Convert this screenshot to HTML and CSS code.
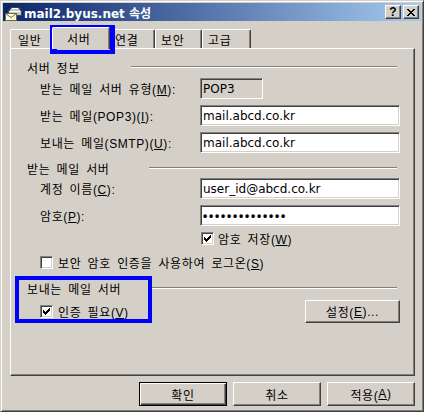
FILE: index.html
```html
<!DOCTYPE html>
<html lang="ko">
<head>
<meta charset="utf-8">
<title>mail2.byus.net 속성</title>
<link rel="stylesheet" href="styles.css">
</head>
<body>
<div class="window">
  <div class="titlebar">
    <svg class="ticon" width="17" height="16" viewBox="0 0 17 16">
      <path d="M3.5 6.5 L6.5 2.5 H13.5 L16.5 6.5 V10.5 H3.5 Z" fill="#c8c8c8" stroke="#404040"/>
      <path d="M4.5 6.5 H15.5" stroke="#ffffff"/>
      <path d="M7 3.5 H13" stroke="#ffffff"/>
      <rect x="0.5" y="8.5" width="11" height="7" fill="#ffffd8" stroke="#6a6a50"/>
      <path d="M0.5 8.5 L6 12.5 L11.5 8.5" fill="none" stroke="#6a6a50"/>
    </svg>
    <span class="title">mail2.byus.net 속성</span>
    <div class="tbtns">
      <span class="tbtn help">?</span>
      <span class="tbtn">
        <svg width="8" height="7" viewBox="0 0 8 7"><path d="M0 0h2v1H0zM6 0h2v1H6zM1 1h2v1H1zM5 1h2v1H5zM2 2h4v1H2zM3 3h2v1H3zM2 4h4v1H2zM1 5h2v1H1zM5 5h2v1H5zM0 6h2v1H0zM6 6h2v1H6z" fill="#000"/></svg>
      </span>
    </div>
  </div>

  <div class="content">
    <div class="tabs">
      <div class="tab t1">일반</div>
      <div class="tab t2 sel">서버</div>
      <div class="tab t3">연결</div>
      <div class="tab t4">보안</div>
      <div class="tab t5">고급</div>
    </div>

    <div class="panel">
      <div class="ghead g1"><span>서버 정보</span><span class="gline wide"></span></div>
      <div class="frow r-first"><span class="flabel">받는 메일 서버 유형(<u>M</u>):</span><span class="field ro">POP3</span></div>
      <div class="frow"><span class="flabel">받는 메일(POP3)(<u>I</u>):</span><span class="field">mail.abcd.co.kr</span></div>
      <div class="frow"><span class="flabel">보내는 메일(SMTP)(<u>U</u>):</span><span class="field">mail.abcd.co.kr</span></div>

      <div class="ghead g2"><span>받는 메일 서버</span><span class="gline"></span></div>
      <div class="frow r-first2"><span class="flabel">계정 이름(<u>C</u>):</span><span class="field">user_id@abcd.co.kr</span></div>
      <div class="frow"><span class="flabel">암호(<u>P</u>):</span><span class="field pw">••••••••••••••</span></div>
      <div class="chk c-save">
        <span class="box"><svg width="11" height="11" viewBox="0 0 11 11"><path transform="translate(1 1)" d="M1 3V6H2V7H3V8H4V7H5V6H6V5H7V4H8V1H7V2H6V3H5V4H4V5H3V4H2V3Z" fill="#000"/></svg></span>
        <span>암호 저장(<u>W</u>)</span>
      </div>
      <div class="chk c-spa">
        <span class="box"></span>
        <span>보안 암호 인증을 사용하여 로그온(<u>S</u>)</span>
      </div>

      <div class="ghead g3"><span>보내는 메일 서버</span><span class="gline"></span></div>
      <div class="lastrow">
        <div class="chk">
          <span class="box"><svg width="11" height="11" viewBox="0 0 11 11"><path transform="translate(1 1)" d="M1 3V6H2V7H3V8H4V7H5V6H6V5H7V4H8V1H7V2H6V3H5V4H4V5H3V4H2V3Z" fill="#000"/></svg></span>
          <span>인증 필요(<u>V</u>)</span>
        </div>
        <span class="btn settings">설정(<u>E</u>)...</span>
      </div>
    </div>

    <div class="buttons">
      <span class="btn dlg def">확인</span>
      <span class="btn dlg">취소</span>
      <span class="btn dlg">적용(<u>A</u>)</span>
    </div>
  </div>

  <div class="hl hl-tab"></div>
  <div class="hl hl-group"></div>
</div>
</body>
</html>
```
FILE: styles.css
```css
* { box-sizing: border-box; }
html, body { margin: 0; padding: 0; }
body {
  width: 424px;
  height: 412px;
  overflow: hidden;
  background: #d4d0c8;
  font-family: "Liberation Sans", "Noto Sans CJK KR", sans-serif;
  font-size: 12px;
  letter-spacing: 0.6px;
  word-spacing: 2.4px;
  color: #000;
}
u { text-decoration: underline; text-underline-offset: 1px; }

.window {
  position: relative;
  width: 424px;
  height: 412px;
  background: #d4d0c8;
  border: 1px solid;
  border-color: #d4d0c8 #404040 #404040 #d4d0c8;
  box-shadow: inset 1px 1px #ffffff, inset -1px -1px #808080;
  padding: 2px;
}

/* title bar */
.titlebar {
  height: 18px;
  display: flex;
  align-items: center;
  padding: 0 2px;
  background: linear-gradient(to right, #0a246a, #a6caf0);
  color: #fff;
}
.ticon { flex: none; margin-top: 1px; }
.title {
  margin-left: 2px;
  font-family: "DejaVu Sans", "Noto Sans CJK KR", sans-serif;
  font-weight: bold;
  font-size: 12px;
  letter-spacing: 0;
  word-spacing: 0;
  white-space: nowrap;
}
.tbtns { margin-left: auto; display: flex; gap: 2px; }
.tbtn {
  width: 16px;
  height: 14px;
  display: flex;
  align-items: center;
  justify-content: center;
  background: #d4d0c8;
  border: 1px solid;
  border-color: #ffffff #404040 #404040 #ffffff;
  box-shadow: inset -1px -1px #808080;
  color: #000;
}
.tbtn.help {
  font-family: "Liberation Sans", sans-serif;
  font-weight: bold;
  font-size: 12px;
  letter-spacing: 0;
  line-height: 1;
}

/* body */
.content { padding: 0 6px 0 7px; }

.tabs {
  display: flex;
  align-items: flex-end;
  height: 21px;
  margin-top: 6px;
}
.tab {
  height: 19px;
  display: flex;
  align-items: center;
  background: #d4d0c8;
  border-top: 1px solid #ffffff;
  border-left: 1px solid #ffffff;
  border-right: 1px solid #404040;
  box-shadow: inset -1px 0 #808080;
  border-radius: 2px 2px 0 0;
  white-space: nowrap;
}
.tab.sel {
  height: 22px;
  margin-bottom: -1px;
  position: relative;
  z-index: 1;
}
.t1 { width: 42px; padding-left: 7px; }
.t2 { width: 58px; padding-left: 14px; }
.t3 { width: 45px; padding-left: 4px; }
.t4 { width: 47px; padding-left: 5px; }
.t5 { width: 49px; padding-left: 5px; }

.panel {
  height: 328px;
  border: 1px solid;
  border-color: #ffffff #404040 #404040 #ffffff;
  box-shadow: inset -1px -1px #808080;
  padding: 9px 0 0 16px;
  display: flex;
  flex-direction: column;
}

.ghead {
  display: flex;
  align-items: center;
  height: 18px;
  margin-right: 17px;
  white-space: nowrap;
}
.gline {
  margin-left: auto;
  width: 248px;
  height: 2px;
  border-top: 1px solid #808080;
  border-bottom: 1px solid #ffffff;
}
.gline.wide { width: 266px; }
.g2 { margin-top: 6px; }
.g3 { margin-top: 10px; }

.frow {
  display: flex;
  align-items: center;
  height: 21px;
  margin-left: 13px;
  margin-top: 6px;
  white-space: nowrap;
}
.frow.r-first { margin-top: 2px; }
.frow.r-first2 { margin-top: 1px; }
.flabel { width: 160px; flex: none; }

.field {
  width: 200px;
  height: 21px;
  flex: none;
  display: flex;
  align-items: center;
  padding-left: 2px;
  background: #ffffff;
  border: 1px solid;
  border-color: #808080 #ffffff #ffffff #808080;
  box-shadow: inset 1px 1px #404040, inset -1px -1px #d4d0c8;
  font-family: "DejaVu Sans", sans-serif;
  letter-spacing: 0;
  word-spacing: 0;
  white-space: nowrap;
}
.field.ro { width: 63px; background: #d4d0c8; }
.field.pw {
  font-family: "Liberation Sans", sans-serif;
  font-size: 12px;
  letter-spacing: 1.8px;
  font-weight: bold;
}

.chk {
  display: flex;
  align-items: center;
  height: 13px;
  white-space: nowrap;
}
.c-save { margin-top: 6px; margin-left: 174px; }
.c-save .box { margin-right: 4px; }
.c-spa { margin-top: 11px; margin-left: 13px; }
.box {
  width: 13px;
  height: 13px;
  flex: none;
  display: block;
  margin-right: 5px;
  background: #ffffff;
  border: 1px solid;
  border-color: #808080 #ffffff #ffffff #808080;
  box-shadow: inset 1px 1px #404040, inset -1px -1px #d4d0c8;
}
.box svg { display: block; }

.lastrow {
  display: flex;
  align-items: center;
  justify-content: space-between;
  height: 23px;
  margin-top: 3px;
  margin-left: 13px;
  margin-right: 14px;
}

.btn {
  display: flex;
  align-items: center;
  justify-content: center;
  background: #d4d0c8;
  border: 1px solid;
  border-color: #ffffff #404040 #404040 #ffffff;
  box-shadow: inset -1px -1px #808080;
  white-space: nowrap;
}
.settings { width: 95px; height: 23px; }

.buttons {
  display: flex;
  justify-content: flex-end;
  gap: 6px;
  margin-top: 6px;
}
.btn.dlg { width: 88px; height: 24px; }
.btn.def {
  border-color: #000000;
  box-shadow: inset 1px 1px #ffffff, inset -1px -1px #404040, inset -2px -2px #808080;
}

/* blue annotation boxes */
.hl {
  position: absolute;
  border: 4px solid #0000ff;
  pointer-events: none;
}
.hl-tab {
  left: 49px;
  top: 24px;
  width: 65px;
  height: 29px;
  border-width: 5px 5px 4px 7px;
}
.hl-group {
  left: 14px;
  top: 275px;
  width: 137px;
  height: 47px;
}
```
